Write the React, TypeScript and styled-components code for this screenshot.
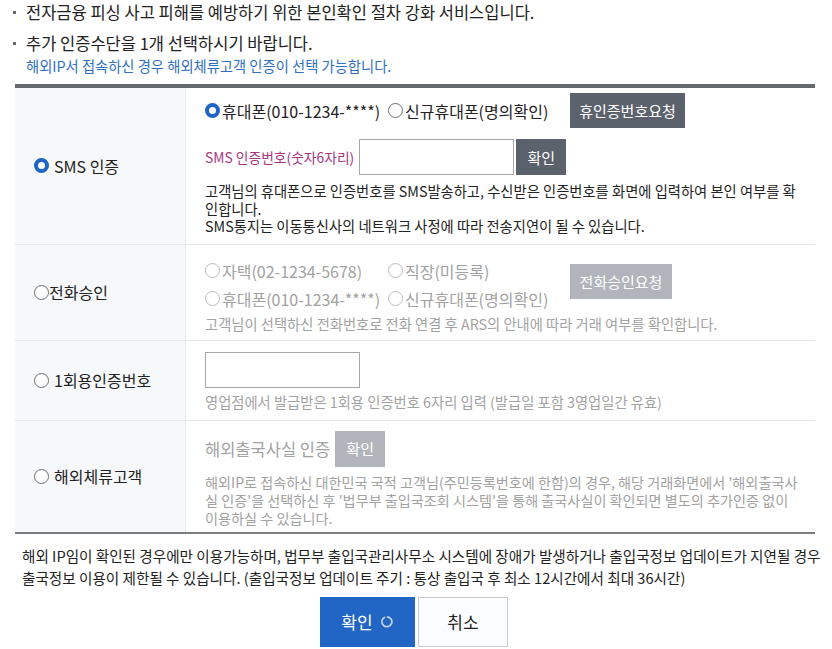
import React from 'react';
import styled, { createGlobalStyle } from 'styled-components';

const GlobalStyle = createGlobalStyle`
  html, body {
    margin: 0;
    padding: 0;
    background: #fff;
  }
  body {
    font-family: 'Noto Sans CJK KR', 'Noto Sans', sans-serif;
    color: #222;
  }
  * {
    box-sizing: border-box;
  }
`;

const Page = styled.div`
  width: 832px;
  padding: 0 17px 0 15px;
`;

const NoticeList = styled.ul`
  list-style: none;
  margin: 0;
  padding: 0;
`;

const NoticeItem = styled.li<{ $gap?: number }>`
  position: relative;
  padding-left: 11px;
  margin-top: ${props => props.$gap ?? 0}px;
  font-size: 16.5px;
  line-height: 24px;

  &::before {
    content: '';
    position: absolute;
    left: -2px;
    top: 11px;
    width: 3px;
    height: 3px;
    background: #666;
  }
`;

const SubNote = styled.p`
  margin: 2px 0 0;
  font-size: 14.3px;
  line-height: 18px;
  color: #2f70c3;
`;

const AuthTable = styled.div`
  margin-top: 9px;
  width: 800px;
  border-top: 4px solid #65686d;
  border-bottom: 2px solid #7b7d80;
`;

const Row = styled.div`
  display: grid;
  grid-template-columns: 171px 1fr;

  & + & {
    border-top: 1px solid #e6e7e9;
  }
`;

const LabelCell = styled.div`
  display: flex;
  align-items: center;
  padding-left: 19px;
  background: #f7f8fa;
  border-right: 1px solid #e8e9ec;
  font-size: 16.5px;
`;

const ContentCell = styled.div<{ $pad: string }>`
  padding: ${props => props.$pad};
`;

const RadioLabel = styled.label<{ $gap?: number; $disabled?: boolean }>`
  display: inline-flex;
  align-items: center;
  gap: ${props => props.$gap ?? 2}px;
  font-size: 16px;
  color: ${props => (props.$disabled ? '#a2a2a2' : '#222')};
  white-space: nowrap;
`;

const RadioMark = styled.span<{ $checked?: boolean; $disabled?: boolean }>`
  display: inline-block;
  flex: none;
  width: 15px;
  height: 15px;
  border-radius: 50%;
  background: #fff;
  border: ${props =>
    props.$checked ? '4px solid #1f63c6' : `1px solid ${props.$disabled ? '#bdbdbd' : '#6f6f6f'}`};
`;

const OptionGrid = styled.div<{ $rowHeight: number }>`
  display: grid;
  grid-template-columns: 183px 182px auto;
  grid-auto-rows: ${props => props.$rowHeight}px;
  align-items: center;
`;

const ActionButton = styled.button<{ $muted?: boolean; $width: number; $span?: boolean }>`
  width: ${props => props.$width}px;
  height: 35px;
  border: 0;
  padding: 0;
  background: ${props => (props.$muted ? '#b1b5bb' : '#5b626c')};
  color: #fff;
  font-family: inherit;
  font-size: 15px;
  ${props => (props.$span ? 'grid-row: 1 / span 2; grid-column: 3; align-self: center; margin-top: -6px;' : '')}
`;

const InputLine = styled.div`
  display: flex;
  align-items: center;
  height: 36px;
`;

const CodeLabel = styled.span`
  margin-right: 5px;
  font-size: 13.8px;
  color: #a8367f;
`;

const CodeInput = styled.input`
  width: 155px;
  height: 36px;
  margin: 0;
  border: 1px solid #a7a7a7;
  background: #fff;
  font-family: inherit;
`;

const ConfirmButton = styled.button<{ $muted?: boolean }>`
  width: 50px;
  height: 36px;
  margin-left: 2px;
  border: 0;
  padding: 0;
  background: ${props => (props.$muted ? '#b1b5bb' : '#5b626c')};
  color: #fff;
  font-family: inherit;
  font-size: 15px;
`;

const MutedTitle = styled.span`
  margin-right: 5px;
  font-size: 16.5px;
  color: #a2a2a2;
`;

const Description = styled.p<{ $muted?: boolean; $top: number; $lh?: number; $size?: number }>`
  margin: ${props => props.$top}px 0 0;
  font-size: ${props => props.$size ?? 14.3}px;
  line-height: ${props => props.$lh ?? 17.5}px;
  color: ${props => (props.$muted ? '#a2a2a2' : '#222')};
  white-space: pre-line;
`;

const FooterNote = styled.p`
  margin: 11px -6px 0 7px;
  font-size: 14.6px;
  line-height: 22px;
  word-break: keep-all;
  color: #222;
`;

const ButtonBar = styled.div`
  display: flex;
  justify-content: center;
  gap: 3px;
  margin-top: 8px;
  padding-right: 2px;
`;

const BottomButton = styled.button<{ $primary?: boolean; $width: number }>`
  display: inline-flex;
  align-items: center;
  justify-content: center;
  gap: 8px;
  width: ${props => props.$width}px;
  height: 50px;
  padding: 0;
  border: 1px solid ${props => (props.$primary ? '#2166c4' : '#c9cbce')};
  background: ${props => (props.$primary ? '#2166c4' : '#fbfcfe')};
  color: ${props => (props.$primary ? '#fff' : '#222')};
  font-family: inherit;
  font-size: 17px;
`;

const Spinner = () => (
  <svg width="13" height="14" viewBox="0 0 13 14" aria-hidden="true">
    <path
      d="M3.4 2.4 A5 5 0 1 0 6.6 1.8"
      fill="none"
      stroke="#c4d3ea"
      strokeWidth="1.7"
      strokeLinecap="round"
    />
  </svg>
);

const smsGuide =
  '고객님의 휴대폰으로 인증번호를 SMS발송하고, 수신받은 인증번호를 화면에 입력하여 본인 여부를 확인합니다.\nSMS통지는 이동통신사의 네트워크 사정에 따라 전송지연이 될 수 있습니다.';

const App: React.FC = () => {
  return (
    <Page>
      <GlobalStyle />
      <NoticeList>
        <NoticeItem>전자금융 피싱 사고 피해를 예방하기 위한 본인확인 절차 강화 서비스입니다.</NoticeItem>
        <NoticeItem $gap={7}>
          추가 인증수단을 1개 선택하시기 바랍니다.
          <SubNote>해외IP서 접속하신 경우 해외체류고객 인증이 선택 가능합니다.</SubNote>
        </NoticeItem>
      </NoticeList>

      <AuthTable>
        <Row>
          <LabelCell>
            <RadioLabel $gap={5}>
              <RadioMark $checked />
              SMS 인증
            </RadioLabel>
          </LabelCell>
          <ContentCell $pad="5px 15px 9px 19px">
            <OptionGrid $rowHeight={35}>
              <RadioLabel>
                <RadioMark $checked />
                휴대폰(010-1234-****)
              </RadioLabel>
              <RadioLabel>
                <RadioMark />
                신규휴대폰(명의확인)
              </RadioLabel>
              <ActionButton $width={115}>휴인증번호요청</ActionButton>
            </OptionGrid>
            <InputLine style={{ marginTop: 11 }}>
              <CodeLabel>SMS 인증번호(숫자6자리)</CodeLabel>
              <CodeInput type="text" />
              <ConfirmButton>확인</ConfirmButton>
            </InputLine>
            <Description $top={7}>{smsGuide}</Description>
          </ContentCell>
        </Row>

        <Row>
          <LabelCell>
            <RadioLabel $gap={0}>
              <RadioMark />
              전화승인
            </RadioLabel>
          </LabelCell>
          <ContentCell $pad="12px 15px 8px 19px">
            <OptionGrid $rowHeight={28}>
              <RadioLabel $disabled>
                <RadioMark $disabled />
                자택(02-1234-5678)
              </RadioLabel>
              <RadioLabel $disabled>
                <RadioMark $disabled />
                직장(미등록)
              </RadioLabel>
              <ActionButton $muted $span $width={102}>
                전화승인요청
              </ActionButton>
              <RadioLabel $disabled>
                <RadioMark $disabled />
                휴대폰(010-1234-****)
              </RadioLabel>
              <RadioLabel $disabled>
                <RadioMark $disabled />
                신규휴대폰(명의확인)
              </RadioLabel>
            </OptionGrid>
            <Description $muted $top={2}>
              고객님이 선택하신 전화번호로 전화 연결 후 ARS의 안내에 따라 거래 여부를 확인합니다.
            </Description>
          </ContentCell>
        </Row>

        <Row>
          <LabelCell>
            <RadioLabel $gap={5}>
              <RadioMark />
              1회용인증번호
            </RadioLabel>
          </LabelCell>
          <ContentCell $pad="11px 15px 9px 19px">
            <InputLine>
              <CodeInput type="text" />
            </InputLine>
            <Description $muted $top={5}>
              영업점에서 발급받은 1회용 인증번호 6자리 입력 (발급일 포함 3영업일간 유효)
            </Description>
          </ContentCell>
        </Row>

        <Row>
          <LabelCell>
            <RadioLabel $gap={5}>
              <RadioMark />
              해외체류고객
            </RadioLabel>
          </LabelCell>
          <ContentCell $pad="10px 15px 5px 19px">
            <InputLine>
              <MutedTitle>해외출국사실 인증</MutedTitle>
              <ConfirmButton $muted style={{ marginLeft: 0 }}>
                확인
              </ConfirmButton>
            </InputLine>
            <Description $muted $top={6} $lh={18} $size={14.15}>
              해외IP로 접속하신 대한민국 국적 고객님(주민등록번호에 한함)의 경우, 해당 거래화면에서 '해외출국사실 인증'을 선택하신 후 '법무부 출입국조회 시스템'을 통해 출국사실이 확인되면 별도의 추가인증 없이 이용하실 수 있습니다.
            </Description>
          </ContentCell>
        </Row>
      </AuthTable>

      <FooterNote>
        해외 IP임이 확인된 경우에만 이용가능하며, 법무부 출입국관리사무소 시스템에 장애가 발생하거나 출입국정보 업데이트가 지연될 경우 출국정보 이용이 제한될 수 있습니다. (출입국정보 업데이트 주기 : 통상 출입국 후 최소 12시간에서 최대 36시간)
      </FooterNote>

      <ButtonBar>
        <BottomButton $primary $width={95}>
          확인
          <Spinner />
        </BottomButton>
        <BottomButton $width={90}>취소</BottomButton>
      </ButtonBar>
    </Page>
  );
};

export default App;
